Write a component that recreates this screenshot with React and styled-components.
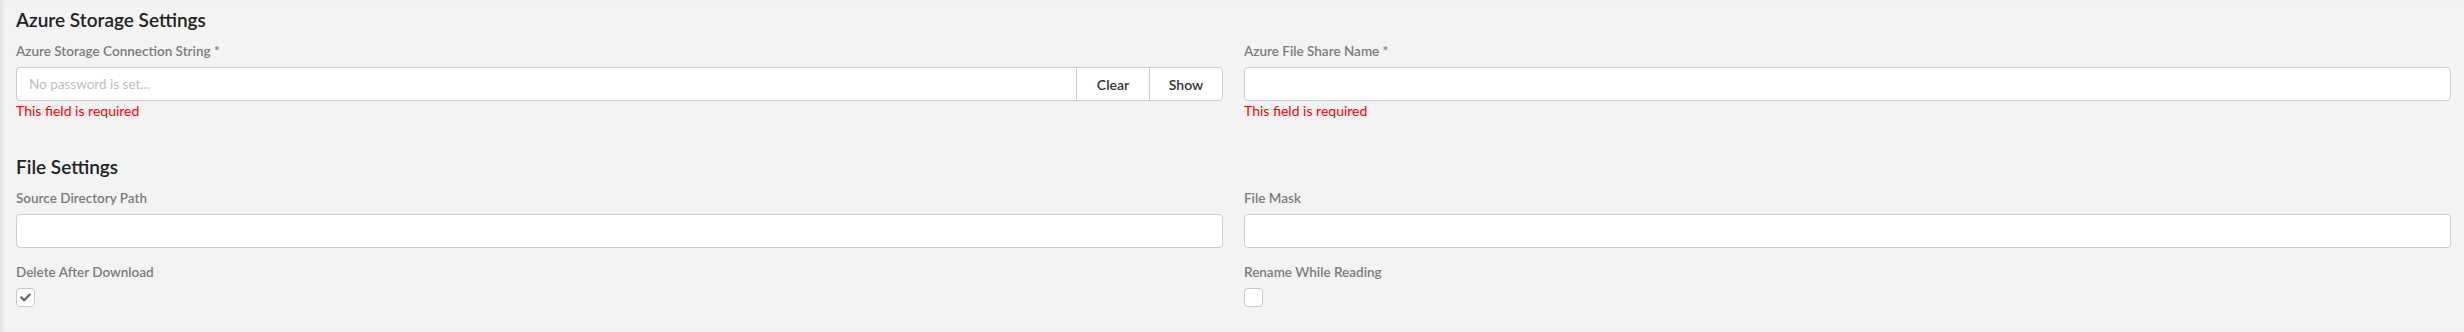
import React from "react";
import styled, { createGlobalStyle } from "styled-components";
import { FaCheck } from "react-icons/fa";

const GlobalStyle = createGlobalStyle`
    html, body {
        margin: 0;
        padding: 0;
        background: #f3f3f3;
    }
    body {
        font-family: Lato, "Liberation Sans", sans-serif;
    }
`;

const App = () => {
    return (
        <>
            <GlobalStyle />
            <Page>
                <Section>
                    <Heading>Azure Storage Settings</Heading>
                    <Grid>
                        <Field>
                            <Label>Azure Storage Connection String *</Label>
                            <InputGroup>
                                <GroupInput type="password" placeholder="No password is set..." />
                                <GroupButton>Clear</GroupButton>
                                <GroupButton last>Show</GroupButton>
                            </InputGroup>
                            <Error>This field is required</Error>
                        </Field>
                        <Field>
                            <Label>Azure File Share Name *</Label>
                            <TextInput type="text" />
                            <Error>This field is required</Error>
                        </Field>
                    </Grid>
                </Section>

                <Section second>
                    <Heading>File Settings</Heading>
                    <Grid>
                        <Field>
                            <Label>Source Directory Path</Label>
                            <TextInput type="text" />
                        </Field>
                        <Field>
                            <Label>File Mask</Label>
                            <TextInput type="text" />
                        </Field>
                        <Field>
                            <Label>Delete After Download</Label>
                            <CheckBox>
                                <FaCheck />
                            </CheckBox>
                        </Field>
                        <Field>
                            <Label>Rename While Reading</Label>
                            <CheckBox />
                        </Field>
                    </Grid>
                </Section>
            </Page>
        </>
    );
};

export default App;

const Page = styled.div`
    height: 332px;
    box-sizing: border-box;
    padding: 8px 13px 0 16px;
    background: #f3f3f3;
    box-shadow: inset 5px 0 4px -3px rgba(0, 0, 0, 0.09);
    overflow: hidden;
`;

const Section = styled.div`
    margin-top: ${(p) => (p.second ? "36px" : "0")};
`;

const Heading = styled.h2`
    margin: 0 0 11px 0;
    font-size: 19px;
    line-height: 24px;
    font-weight: 600;
    color: #222;
`;

const Grid = styled.div`
    display: grid;
    grid-template-columns: 1fr 1fr;
    column-gap: 21px;
    row-gap: 16px;
`;

const Field = styled.div`
    display: flex;
    flex-direction: column;
    min-width: 0;
`;

const Label = styled.label`
    font-size: 13.5px;
    line-height: 16px;
    font-weight: 600;
    color: #7b7b7b;
    margin-bottom: 8px;
`;

const TextInput = styled.input`
    box-sizing: border-box;
    height: 34px;
    width: 100%;
    border: 1px solid #cccccc;
    border-radius: 4px;
    background: #fff;
    padding: 0 12px;
    font-family: inherit;
    font-size: 14px;
    outline: none;
`;

const InputGroup = styled.div`
    display: flex;
    height: 34px;
`;

const GroupInput = styled.input`
    flex: 1;
    min-width: 0;
    box-sizing: border-box;
    height: 34px;
    border: 1px solid #cccccc;
    border-right: none;
    border-radius: 4px 0 0 4px;
    background: #fff;
    padding: 0 12px;
    font-family: inherit;
    font-size: 13.5px;
    outline: none;

    &::placeholder {
        color: #bdbdbd;
    }
`;

const GroupButton = styled.button`
    box-sizing: border-box;
    height: 34px;
    width: ${(p) => (p.last ? "74px" : "73px")};
    border: 1px solid #cccccc;
    border-right: ${(p) => (p.last ? "1px solid #cccccc" : "none")};
    border-radius: ${(p) => (p.last ? "0 4px 4px 0" : "0")};
    background: #fff;
    color: #333;
    font-family: inherit;
    font-size: 14px;
    font-weight: 600;
    cursor: pointer;
`;

const Error = styled.div`
    margin-top: 2px;
    font-size: 14px;
    line-height: 16px;
    color: #ff0000;
`;

const CheckBox = styled.div`
    box-sizing: border-box;
    width: 19px;
    height: 19px;
    border: 1px solid #c8c8c8;
    border-radius: 4px;
    background: #fff;
    display: flex;
    align-items: center;
    justify-content: center;
    color: #666;
    font-size: 11px;
`;
